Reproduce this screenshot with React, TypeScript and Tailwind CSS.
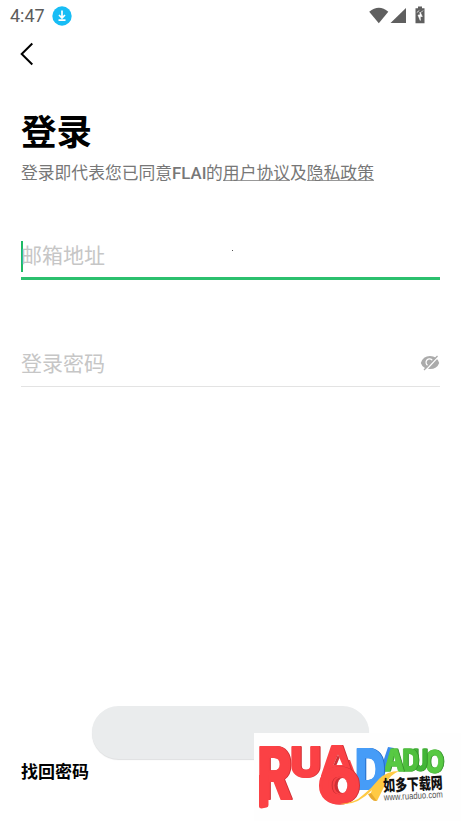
type LetterProps = {
  ch: string;
  x: number;
  y: number;
  w: number;
  h: number;
  face: string;
  stroke?: number;
  className: string;
};

// One extruded letter: a rounded bright face with a hard shadow as its side.
function Letter({ ch, x, y, w, h, face, stroke = 1, className }: LetterProps) {
  return (
    <text
      x={x}
      y={y}
      fontSize={h / 0.727}
      textLength={w}
      lengthAdjust="spacingAndGlyphs"
      fill={face}
      stroke={face}
      strokeWidth={stroke}
      strokeLinejoin="round"
      className={`font-['Inter',sans-serif] font-extrabold ${className}`}
    >
      {ch}
    </text>
  );
}

const redSide = '[filter:drop-shadow(1px_0_0_#cf3035)]';
const blueSide = '[filter:drop-shadow(1px_0_0_#246dca)]';
const greenSide = '[filter:drop-shadow(1px_0_0_#35952c)]';

function Watermark() {
  const red = '#fb4145';
  const darkRed = '#cf3035';
  return (
    <div className="absolute left-[254px] top-[733px] h-[88px] w-[207px] bg-[#fefefe]">
      <svg width="207" height="88" viewBox="254 733 207 88">
        <Letter ch="R" x={257} y={799} w={35} h={52} face={red} stroke={2} className={redSide} />
        <path d="M259 775h9.500v30q0 2-2 2.500l-5 1q-2.500 0-2.500-2z" fill={red} />
        <Letter ch="U" x={290} y={776.5} w={31} h={30} face={red} stroke={2} className={redSide} />
        <Letter ch="O" x={424.500} y={773} w={19.500} h={23} face="#58c943" stroke={1} className={greenSide} />
        <Letter ch="U" x={412.500} y={771} w={15} h={22} face="#43b538" stroke={1} className={greenSide} />
        <Letter ch="D" x={402} y={771} w={17} h={22} face="#4fc03e" stroke={1} className={greenSide} />
        <path d="m388 747 6 1-9 25-5-2z" fill="#398bed" />
        <Letter ch="A" x={384} y={771} w={20} h={22} face="#58c943" stroke={1} className={greenSide} />
        <Letter ch="D" x={355} y={788.5} w={30} h={40} face="#469cf7" stroke={2} className={blueSide} />
        <path d="m330 760-10 21v10l7 8h24l7-8v-10l-8-21z" fill={red} />
        <Letter ch="A" x={321} y={776} w={32} h={29.500} face={red} stroke={2} className={redSide} />
        <path d="m338 754.500 4.500 10.500h-9z" fill="#fff" />
        <path d="m338 754.500-4.500 10.500h3l3-7z" fill={darkRed} />
        <Letter ch="O" x={318.500} y={803} w={41} h={35} face={red} stroke={3} className={redSide} />
        <ellipse cx="341" cy="785.500" rx="6.500" ry="8" fill={darkRed} />
        <ellipse cx="342.500" cy="785.500" rx="4.800" ry="7.500" fill="#fff" />
        <path d="M340 804q15-1 23-9 9-7 16-16 8-8 20-8-9 4-13 12l-9 18-7-6 2-5q-15 16-32 14z" fill="#ffca43" />
        <path d="m368 794 3-1 6 8q-5 1-9-7z" fill="#e7a92e" />
        <g transform="rotate(-3 384 791)">
          <text x="383.500" y="791.500" fontSize="16" textLength="59.500" lengthAdjust="spacingAndGlyphs" fill="#111" className="font-['Noto_Sans_CJK_SC',sans-serif] font-black">
            如多下载网
          </text>
          <text x="383.500" y="800.500" fontSize="9.500" textLength="59" lengthAdjust="spacingAndGlyphs" fill="#555" className="font-['Liberation_Sans',sans-serif]">
            www.ruaduo.com
          </text>
        </g>
      </svg>
    </div>
  );
}

function StatusBar() {
  return (
    <div className="flex h-[31px] items-center pl-[10px]">
      <span className="w-[42px] whitespace-nowrap font-['Roboto',sans-serif] text-[18px] leading-[31px] text-[#5c5c5c]">4:47</span>
      <svg width="20" height="20" viewBox="0 0 20 20" className="shrink-0">
        <circle cx="10" cy="10" r="9.7" fill="#18bdf5" />
        <path d="M10 4.500v7M7 9l3 3 3-3M6.500 14.200h7" fill="none" stroke="#fff" strokeWidth="1.700" />
      </svg>
      <svg width="60" height="20" viewBox="368 5.500 60 20" className="ml-auto mr-[33px] shrink-0">
        <path d="M369.200 11.200Q379 3.300 388.300 11.200L378.800 22.700z" fill="#5f5f5f" />
        <path d="M406 7.500v15h-15.500z" fill="#5f5f5f" />
        <path d="M418 6h4v1.800h2.500v15h-9v-15h2.500z" fill="#5f5f5f" />
        <path d="M420 11.500v3h-2l2.300 5.500v-4h2z" fill="#fff" stroke="#fff" strokeWidth=".6" />
        <path d="m416.800 12 2.500-2M421 12l2-2" stroke="#ddd" />
      </svg>
    </div>
  );
}

export default function App() {
  return (
    <main className="relative flex h-[821px] w-[461px] flex-col overflow-hidden bg-white font-['Noto_Sans_CJK_SC',sans-serif]">
      <StatusBar />
      <button className="ml-5 mt-[10px] h-[26px] w-4" aria-label="返回">
        <svg width="16" height="26" viewBox="0 0 16 26">
          <path d="M12.300 2.500 1.700 13l10.600 10.500" fill="none" stroke="#000" strokeWidth="2" />
        </svg>
      </button>
      <section className="flex flex-col px-[21px] pt-[39px]">
        <h1 className="text-[35.500px] font-bold leading-[48px] text-black">登录</h1>
        <p className="mt-[5px] flex h-[26px] whitespace-nowrap text-[16.800px] leading-[26px] text-[#777]">
          <span>登录即代表您已同意</span>
          <span className="w-[34px] pt-px font-['Roboto',sans-serif] text-[16.800px] font-medium">FLAI</span>
          <span>的</span>
          <a className="h-[22px] border-b border-[#999]">用户协议</a>
          <span>及</span>
          <a className="h-[22px] border-b border-[#999]">隐私政策</a>
        </p>
      </section>
      <label className="relative mx-[21px] mt-[56px] flex h-[39px] items-start border-b-[3px] border-[#2bc06e]">
        <span className="-mr-[2px] h-[31px] w-[2px] shrink-0 bg-[#20ba65]" />
        <span className="-mt-[2px] text-[21px] leading-[31px] text-[#c6c6c6]">邮箱地址</span>
        <span className="absolute left-[211px] top-[9px] size-px bg-[#555]" />
      </label>
      <label className="mx-[21px] mt-[68px] flex h-[39px] items-start justify-between border-b border-[#e3e3e3]">
        <span className="-mt-px text-[21px] leading-[31px] text-[#c6c6c6]">登录密码</span>
        <svg width="20" height="18" viewBox="0 0 20 18" className="mt-[6px]">
          <path d="M.8 9Q3 2 10 2t9.200 7q-2.200 6-9.200 6T.8 9" fill="#ababab" />
          <path d="M12.500 6.500A3.500 3.500 0 1 0 8 11.500" fill="none" stroke="#fff" strokeWidth="1.200" />
          <path d="m5.500 16.500 13-14" stroke="#fff" strokeWidth="1.500" />
          <path d="m4 16 13.500-14" stroke="#ababab" strokeWidth="1.300" />
        </svg>
      </label>
      <button className="mb-[62px] ml-[92px] mt-auto h-[53px] w-[277px] shrink-0 rounded-full bg-[#eaeced] shadow-[0_1px_1px_#dedfe0]" aria-label="登录" />
      <a className="absolute left-[21px] top-[758px] text-[17px] font-bold leading-[26px] text-black">找回密码</a>
      <Watermark />
    </main>
  );
}
